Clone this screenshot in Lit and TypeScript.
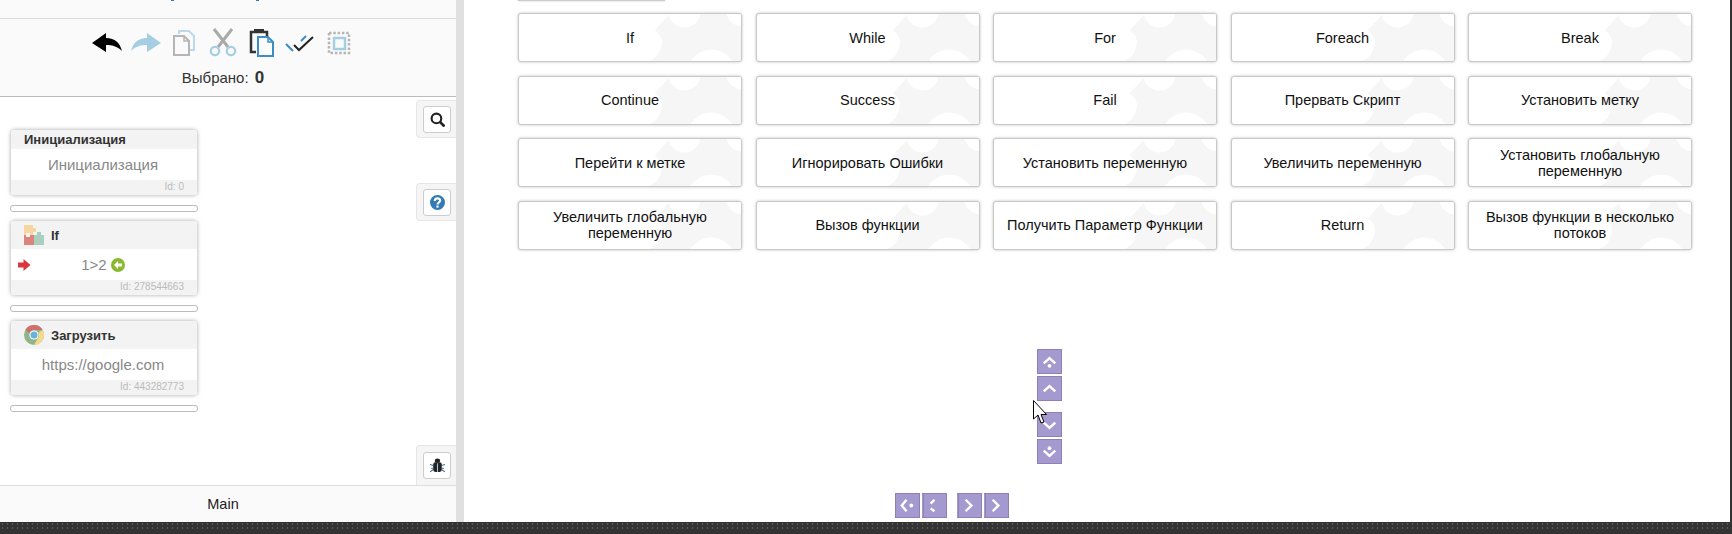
import { LitElement, css, html, svg } from "lit";
import { customElement } from "lit/decorators.js";

const ROWS = [
  "If", "While", "For", "Foreach", "Break",
  "Continue", "Success", "Fail", "Прервать Скрипт", "Установить метку",
  "Перейти к метке", "Игнорировать Ошибки", "Установить переменную", "Увеличить переменную", "Установить глобальную переменную",
  "Увеличить глобальную переменную", "Вызов функции", "Получить Параметр Функции", "Return", "Вызов функции в несколько потоков",
];

const puzzleBg = html`<svg class="puzzle" viewBox="0 0 224 49" preserveAspectRatio="none">
  <path fill="#f6f6f6" d="M152 0L137 17Q146 24 144 32Q142 44 132 49H224V0Z" />
  <circle cx="167" cy="-2" r="16" fill="#fff" />
  <circle cx="226" cy="-4" r="17" fill="#fff" />
  <circle cx="194" cy="61" r="24" fill="#fff" />
</svg>`;

const icons = {
  undo: svg`<path fill="#000" d="M0 15L14 5V10C23 10 28 15 30 23C25 18 20 17 14 17V24Z" />`,
  redo: svg`<path fill="#a6cee3" d="M30 15L16 5V10C7 10 2 15 0 23C5 18 10 17 16 17V24Z" />`,
  copy: svg`<path fill="none" stroke="#bcd8ea" stroke-width="2" d="M10 6V3H20L25 8V22H21" />
    <path fill="#fafafa" stroke="#b5b5b5" stroke-width="2" d="M5 8H15L20 13V27H5Z" />
    <path fill="none" stroke="#b5b5b5" stroke-width="1.5" d="M15 8V13H20" />`,
  cut: svg`<path fill="none" stroke="#aaa" stroke-width="3" d="M6 1L20 19M24 1L10 19" />
    <circle cx="7" cy="23" r="4.2" fill="none" stroke="#a6cee3" stroke-width="2.2" />
    <circle cx="23" cy="23" r="4.2" fill="none" stroke="#a6cee3" stroke-width="2.2" />`,
  paste: svg`<path fill="none" stroke="#333" stroke-width="2.5" d="M9 24H4V4H20V8" />
    <path fill="none" stroke="#333" stroke-width="2" d="M7 2H17" />
    <path fill="#fafafa" stroke="#3d8dc4" stroke-width="2" d="M11 9H21L26 14V28H11Z" />
    <path fill="none" stroke="#3d8dc4" stroke-width="1.5" d="M21 9V14H26" />`,
  check: svg`<path fill="none" stroke="#3d8dc4" stroke-width="2" d="M1 16L8 23M16 13L21 8" />
    <path fill="none" stroke="#222" stroke-width="2" d="M9 17L14 22L28 9" />`,
  select: svg`<rect x="5" y="5" width="20" height="20" fill="none" stroke="#b5b5b5" stroke-width="2.500" stroke-dasharray="2.500 1.800" />
    <rect x="10" y="10" width="11" height="11" fill="none" stroke="#a6cee3" stroke-width="2.500" />`,
};

const puzzleIcon = html`<svg class="card-icon" viewBox="0 0 20 20">
  <path fill="#f5d5a0" d="M0 0H9V3H12V7H9V10H6V8H2V10H0Z" />
  <path fill="#d9857b" d="M0 10H2V12H6V10H10V20H0Z" />
  <path fill="#a9cfc0" d="M10 10H13V7H17V10H20V20H10Z" />
</svg>`;

const chromeIcon = html`<svg class="card-icon" viewBox="0 0 20 20">
  <circle cx="10" cy="10" r="10" fill="#8db78a" />
  <path fill="#d0706c" d="M1.3 5A10 10 0 0 1 18.7 5H10A5 5 0 0 0 5.5 8Z" />
  <path fill="#f2d98c" d="M18.7 5A10 10 0 0 1 10 20L14.3 12.5A5 5 0 0 0 14.3 7.500Z" />
  <circle cx="10" cy="10" r="4.6" fill="#fff" />
  <circle cx="10" cy="10" r="3.500" fill="#6ab0d8" />
</svg>`;

const chevrons = {
  first: svg`<path d="M6 14L12 8.500L18 14" /><circle cx="12" cy="16.500" r="2" class="dot" />`,
  up: svg`<path d="M6 15L12 9.500L18 15" />`,
  down: svg`<path d="M6 10L12 15.500L18 10" />`,
  last: svg`<path d="M6 11L12 16.500L18 11" /><circle cx="12" cy="8.500" r="2" class="dot" />`,
  start: svg`<path d="M11 6L6 12L11 18" /><circle cx="16" cy="12" r="2" class="dot" />`,
  prev: svg`<path d="M13 6L9 10M9 15L13 18" />`,
  next: svg`<path d="M9 6L15 12L9 18" />`,
};

@customElement("app-root")
export class AppRoot extends LitElement {
  static styles = css`
    :host {
      display: block;
      font-family: "Liberation Sans", Arial, sans-serif;
    }
    .shell {
      height: 534px;
      background: #333;
      display: flex;
      flex-direction: column;
      overflow: hidden;
    }
    .top {
      flex: 1;
      min-height: 0;
      display: flex;
      padding-right: 2px;
    }
    .dots {
      height: 8px;
      margin-bottom: 4px;
      background-image: radial-gradient(#585858 1px, transparent 1.2px);
      background-size: 5px 4px;
    }

    .panel {
      width: 456px;
      flex: none;
      display: flex;
      flex-direction: column;
      background: #fafafa;
      border-right: 8px solid #e0e0e0;
    }
    .crumbs {
      height: 18px;
      flex: none;
      border-bottom: 1px solid #ddd;
      display: flex;
    }
    .crumbs i {
      width: 3px;
      height: 1px;
      background: #337ab7;
      margin-left: 171px;
    }
    .crumbs i + i {
      margin-left: 82px;
    }
    .toolbar {
      height: 78px;
      flex: none;
      box-sizing: border-box;
      border-bottom: 1px solid #bbb;
      padding: 9px 10px 0 0;
      display: flex;
      flex-direction: column;
      align-items: center;
    }
    .tools {
      display: flex;
      gap: 8.670px;
    }
    .tools svg {
      display: block;
      width: 30px;
      height: 30px;
    }
    .picked {
      margin-top: 10px;
      font-size: 15px;
      line-height: 20px;
      color: #333;
    }
    .picked b {
      font-size: 17px;
      margin-left: 2px;
    }

    .canvas {
      flex: 1;
      min-height: 0;
      position: relative;
      background: #fff;
      padding: 33px 0 0 11px;
    }
    .card {
      width: 186px;
      border-radius: 3px;
      box-shadow: 0 0 4px rgba(0, 0, 0, 0.35);
      overflow: hidden;
      background: #fff;
    }
    .card-head {
      background: #f3f3f3;
      display: flex;
      align-items: center;
      gap: 7px;
      padding-left: 13px;
      height: 28px;
      font-size: 13px;
      font-weight: bold;
      color: #333;
    }
    .card-head.plain {
      height: 19px;
    }
    .card-icon {
      width: 20px;
      height: 20px;
      flex: none;
    }
    .card-body {
      position: relative;
      height: 31px;
      box-sizing: border-box;
      padding-right: 2px;
      display: flex;
      align-items: center;
      justify-content: center;
      gap: 4px;
      font-size: 15px;
      color: #888;
    }
    .card-body svg.back {
      width: 14px;
      height: 14px;
    }
    .card-body svg.flag {
      position: absolute;
      left: 6px;
      top: 9px;
      width: 14px;
      height: 14px;
    }
    .card-foot {
      height: 15px;
      background: #f3f3f3;
      text-align: right;
      padding-right: 13px;
      font-size: 10px;
      line-height: 13px;
      color: #bbb;
    }
    .slot {
      width: 186px;
      height: 5px;
      margin: 10px 0 9px -1px;
      border: 1px solid #bbb;
      border-radius: 3px;
    }

    .side {
      position: absolute;
      right: 0;
      width: 40px;
      height: 38px;
      box-sizing: border-box;
      background: #f5f5f5;
      border: 1px solid #e6e6e6;
      border-right: none;
      border-radius: 4px 0 0 4px;
      display: flex;
      align-items: center;
      justify-content: flex-start;
      padding-left: 6px;
    }
    .side span {
      width: 28px;
      height: 27px;
      box-sizing: border-box;
      background: #fff;
      border: 1px solid #ccc;
      border-radius: 3px;
      display: flex;
      align-items: center;
      justify-content: center;
    }
    .side svg {
      width: 15px;
      height: 15px;
    }
    .search {
      top: 3px;
    }
    .help {
      top: 86px;
    }
    .bug {
      bottom: 0;
      height: 40px;
      border-bottom: none;
      border-radius: 4px 0 0 0;
    }
    .tab {
      height: 37px;
      flex: none;
      box-sizing: border-box;
      border-top: 1px solid #ddd;
      padding-right: 10px;
      display: flex;
      align-items: center;
      justify-content: center;
      font-size: 14.500px;
      color: #222;
    }

    .main {
      flex: 1;
      min-width: 0;
      position: relative;
      background: #fff;
      padding: 0 38px 0 54px;
    }
    .cut-off {
      width: 147px;
      height: 1px;
      background: #ccc;
      box-shadow: 0 0 2px rgba(0, 0, 0, 0.3);
    }
    .grid {
      display: grid;
      grid-template-columns: repeat(5, 1fr);
      grid-auto-rows: 49px;
      gap: 13.670px 13.500px;
      margin-top: 12px;
    }
    .action {
      position: relative;
      overflow: hidden;
      background: #fff;
      border: 1px solid #c8c8c8;
      border-radius: 3px;
      box-shadow: 0 0 3px rgba(0, 0, 0, 0.25);
      display: flex;
      align-items: center;
      justify-content: center;
      text-align: center;
      padding: 0 8px;
      font-size: 14.500px;
      line-height: 16px;
      color: #111;
    }
    .action span {
      position: relative;
    }
    .puzzle {
      position: absolute;
      inset: 0;
      width: 100%;
      height: 100%;
    }

    .pager {
      width: 25px;
      height: 25px;
      box-sizing: border-box;
      position: relative;
      background: #a59acf;
      border: 1px solid #8f7fb5;
    }
    .pager svg {
      display: block;
      width: 23px;
      height: 23px;
    }
    .pager path {
      fill: none;
      stroke: #fff;
      stroke-width: 2.500;
    }
    .pager .dot {
      fill: #fff;
    }
    .pager.bar::before {
      content: "";
      position: absolute;
      left: 1px;
      top: 0;
      bottom: 0;
      width: 1px;
      background: #8f7fb5;
    }
    .pager.bar {
      border-left: none;
    }
    .vert {
      display: flex;
      flex-direction: column;
      gap: 2px;
      margin: 99px 0 0 519px;
      width: 25px;
    }
    .vert .pager:nth-child(3) {
      margin-top: 9px;
    }
    .horiz {
      display: flex;
      gap: 2px;
      margin: 29px 0 0 377px;
    }
    .horiz .pager:nth-child(3) {
      margin-left: 8px;
    }
    .cursor {
      position: absolute;
      left: 569px;
      top: 400px;
      width: 14px;
      height: 25px;
    }
  `;

  private pager(name: keyof typeof chevrons, bar = false) {
    return html`<div class="pager ${bar ? "bar" : ""}">
      <svg viewBox="0 0 24 24">${chevrons[name]}</svg>
    </div>`;
  }

  render() {
    return html`<div class="shell">
      <div class="top">
        <div class="panel">
          <div class="crumbs"><i></i><i></i></div>
          <div class="toolbar">
            <div class="tools">
              ${Object.values(icons).map((i) => html`<svg viewBox="0 0 30 30">${i}</svg>`)}
            </div>
            <div class="picked">Выбрано: <b>0</b></div>
          </div>
          <div class="canvas">
            <div class="card">
              <div class="card-head plain">Инициализация</div>
              <div class="card-body">Инициализация</div>
              <div class="card-foot">Id: 0</div>
            </div>
            <div class="slot"></div>
            <div class="card">
              <div class="card-head">${puzzleIcon}If</div>
              <div class="card-body">
                <svg class="flag" viewBox="0 0 14 14"><path fill="#d9363e" d="M1 4.500H6.500V1L13.500 7L6.500 13V9.500H1Z" /></svg>
                1>2
                <svg class="back" viewBox="0 0 14 14">
                  <circle cx="7" cy="7" r="7" fill="#8ab92d" />
                  <path fill="#fff" d="M3 7L7 3V5.500H11V8.500H7V11Z" />
                </svg>
              </div>
              <div class="card-foot">Id: 278544663</div>
            </div>
            <div class="slot"></div>
            <div class="card">
              <div class="card-head">${chromeIcon}Загрузить</div>
              <div class="card-body">https://google.com</div>
              <div class="card-foot">Id: 443282773</div>
            </div>
            <div class="slot"></div>

            <div class="side search">
              <span><svg viewBox="0 0 14 14">
                <circle cx="6" cy="6" r="4.500" fill="none" stroke="#222" stroke-width="2" />
                <path stroke="#222" stroke-width="2.500" d="M9 9L13.500 13.500" />
              </svg></span>
            </div>
            <div class="side help">
              <span><svg viewBox="0 0 14 14">
                <circle cx="7" cy="7" r="7" fill="#337ab7" />
                <path fill="none" stroke="#fff" stroke-width="2" d="M4.500 5.500C4.500 2.500 9.500 2.500 9.500 5.200C9.500 6.800 7 6.800 7 8.800" />
                <rect x="6" y="9.800" width="2" height="2" fill="#fff" />
              </svg></span>
            </div>
            <div class="side bug">
              <span><svg viewBox="0 0 14 14">
                <path stroke="#3d6f96" stroke-width="1" d="M0 6L3 7M14 6L11 7M0 13L3 11M14 13L11 11M1 9.500H3M13 9.500H11" />
                <ellipse cx="7" cy="2.500" rx="2.500" ry="2" fill="#222" />
                <rect x="3" y="4" width="8" height="9" rx="2" fill="#222" />
                <rect x="6.500" y="5" width="1" height="8" fill="#9cc4e0" />
              </svg></span>
            </div>
          </div>
          <div class="tab">Main</div>
        </div>

        <div class="main">
          <div class="cut-off"></div>
          <div class="grid">
            ${ROWS.map((t) => html`<div class="action">${puzzleBg}<span>${t}</span></div>`)}
          </div>
          <div class="vert">
            ${this.pager("first")}${this.pager("up")}${this.pager("down")}${this.pager("last")}
          </div>
          <div class="horiz">
            ${this.pager("start")}${this.pager("prev", true)}${this.pager("next", true)}${this.pager("next", true)}
          </div>
          <svg class="cursor" viewBox="0 0 14 25">
            <path fill="#fff" stroke="#000" d="M0.500 0.500V19L5 15L8 23L11 22L8 14.500H13.500Z" />
          </svg>
        </div>
      </div>
      <div class="dots"></div>
    </div>`;
  }
}
